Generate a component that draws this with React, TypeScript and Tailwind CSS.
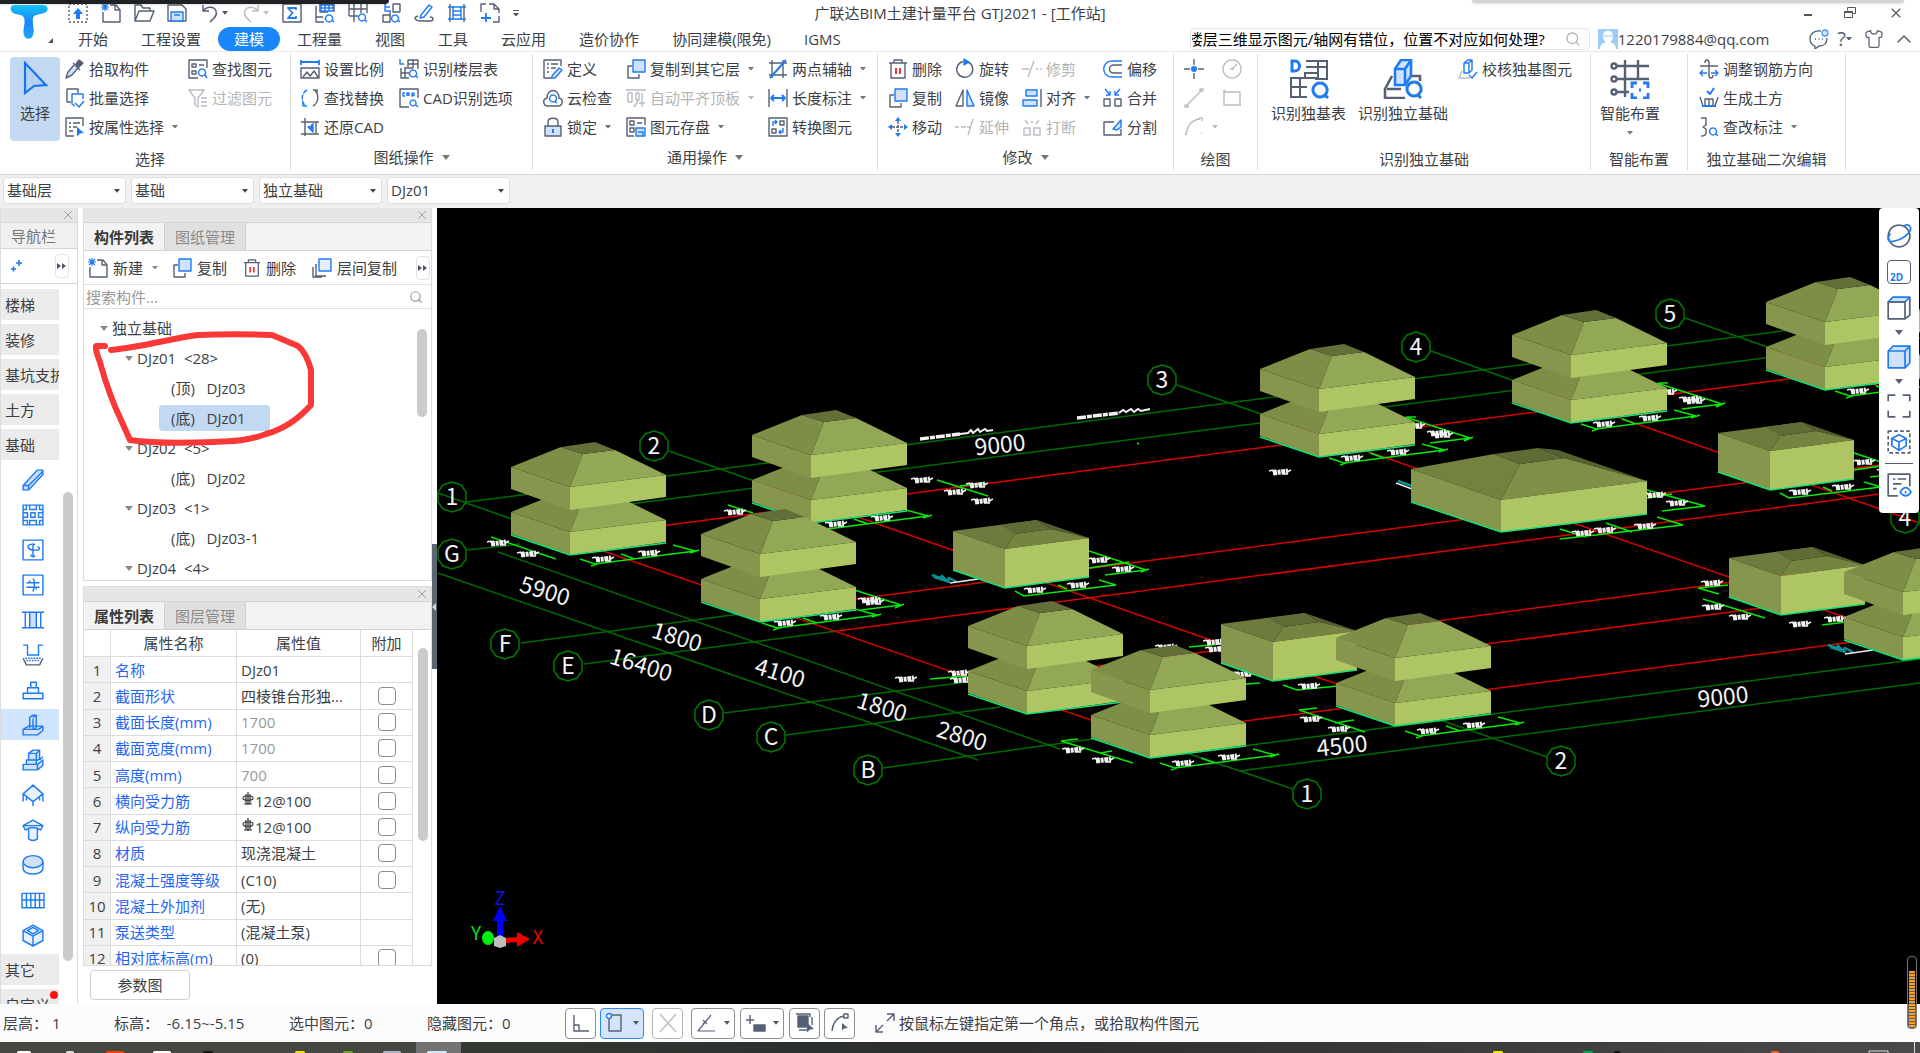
import React from "react";
import { ChevronUp, Search, Shirt, X } from "lucide-react";

const INK = "#566074";
const BLUE = "#1f7bf2";
const PALE = "#cfe1fb";
const GRAY = "#b9bcc2";

/* ---------- icons, all on a 20 x 20 grid ---------- */

const icons: Record<string, React.ReactNode> = {
  upload: (
    <>
      <path d="M1 5V1h18v18H1z" strokeDasharray="2 2" />
      <path d="M10 5l5 6h-3v5H8v-5H5z" fill={BLUE} stroke="none" />
    </>
  ),
  newDoc: (
    <>
      <path d="M9 2h6l4 5v12H2V9" />
      <path d="M14 2v5h5" />
      <path d="M1 1l6 6M7 1L1 7M4 0v8M0 4h8" stroke={BLUE} strokeWidth="1.2" />
    </>
  ),
  open: <path d="M1 18V2h6l2 3h7v3M1 18L5 8h15l-4 10z" />,
  save: (
    <>
      <path d="M3 2h12l4 4v12H1V2z" />
      <path d="M4 9h12v9H4z" fill={PALE} stroke={BLUE} />
      <path d="M7 12h6" stroke={BLUE} />
    </>
  ),
  undo: <path d="M3 8c4-5 11-5 13 0s-3 8-6 11M3 2v6h6" />,
  redo: <path d="M17 8C13 3 6 3 4 8s3 8 6 11M17 2v6h-6" stroke={GRAY} />,
  sigma: (
    <>
      <path d="M1 1h18v18H1z" />
      <path d="M14 7V5H6l4.500 5L6 15h8v-2" stroke={BLUE} strokeWidth="1.800" />
    </>
  ),
  sheetFind: (
    <>
      <path d="M5 1h14v8M5 1v8h8M1 3v16h8M1 14h7" />
      <path d="M6 2h12v6H6zM6 5h12M10 2v6M14 2v6M14 12a3.500 3.500 0 1 0 .1 0M17 17l2 2" stroke={BLUE} />
    </>
  ),
  gridFind: (
    <>
      <path d="M1 6h18M1 13h9M6 1v18M13 1v9M1 1v12M19 1v9" />
      <path d="M14 11a3.500 3.500 0 1 0 .1 0M17 17l2 2" stroke={BLUE} />
    </>
  ),
  swapFind: (
    <>
      <path d="M12 1h7v8M12 1v8h7M2 12v7h7v-7zM9 9v4" />
      <path d="M4 1v7h6M4 4h5M14 12a3.500 3.500 0 1 0 .1 0M17 17l2 2" stroke={BLUE} />
    </>
  ),
  edit: (
    <>
      <path d="M7 12l8-10 3 2-8 10-4 1z" stroke={BLUE} />
      <path d="M4 13c-6 2-2 5 3 5h9c4 0 4-4 0-4" />
    </>
  ),
  column: (
    <>
      <path d="M3 1v18M17 1v18" />
      <path d="M6 3v14M14 3v14M1 4h18M1 16h18M6 8h8M6 12h8" stroke={BLUE} />
    </>
  ),
  addPage: (
    <>
      <path d="M1 9V1h5M9 1h5l5 5v4M19 13v6h-6M14 1v5h5" />
      <path d="M1 15h10M6 10v9" stroke={BLUE} strokeWidth="1.800" />
    </>
  ),
  pipette: (
    <>
      <path d="M9 6L3 13l-2 6 6-3 6-7" fill={PALE} />
      <path d="M8 4l7 7M11 5l3-4 4 3-4 4z" fill={INK} />
    </>
  ),
  batch: (
    <>
      <path d="M6 14H2V1h11v4" />
      <path d="M10 18L7 16V6h11v5" stroke={BLUE} />
      <path d="M10 15l4 4 5-6" stroke={BLUE} />
    </>
  ),
  listPick: (
    <>
      <path d="M18 9V1H1v18h8M4 6h2M8 6h7M4 10h2M8 10h4M4 14h4" />
      <path d="M12 10l7 6-4 .5-3 3z" fill={BLUE} stroke="none" />
    </>
  ),
  listFind: (
    <>
      <path d="M19 9V1H1v18h9M4 5h4v3H4zM4 12h4v3H4zM11 6h5" />
      <path d="M14 10a3.500 3.500 0 1 0 .1 0M17 16l2 3" stroke={BLUE} />
    </>
  ),
  filter: <path d="M1 2h15l-6 8v9l-3-2v-7zM13 10h6M13 14h6M13 18h6" stroke={GRAY} />,
  ratio: (
    <>
      <path d="M1 9h18v10H1zM3 18l4-5 3 4 4-5 4 6" />
      <path d="M1 1v5M19 1v5M1 3h18" stroke={BLUE} strokeWidth="1.800" />
    </>
  ),
  replace: (
    <>
      <path d="M7 2C1 5 1 14 5 17" strokeDasharray="5 1" stroke={BLUE} />
      <path d="M7 18H3v-4" stroke={BLUE} />
      <path d="M13 18c6-3 6-12 2-15M13 2h4v4" />
    </>
  ),
  restore: (
    <>
      <path d="M1 5h18M5 1v18M1 17h18M16 5v12" />
      <path d="M14 7c-2 0-3 2-3 4M8 10l5 5V9z" stroke={BLUE} fill={BLUE} />
    </>
  ),
  floors: (
    <>
      <path d="M9 8V1h10v9M9 5h10M2 9v10h8M2 14h8M6 8v11M6 9h8V1" />
      <path d="M1 0v5h4M14 11a3.500 3.500 0 1 0 .1 0M17 17l2 2" stroke={BLUE} />
    </>
  ),
  cad: (
    <>
      <path d="M10 19H1V1h18v9" />
      <path d="M6 5H4v3h2M8 8V5h2v3M8 7h2M13 5v3c3 0 3-3 0-3M14 12a3 3 0 1 0 .1 0M17 17l2 2" stroke={BLUE} />
    </>
  ),
  define: (
    <>
      <path d="M18 7V1H1v18h8M4 5h2M8 5h7M4 9h2M8 9h5M4 13h2" />
      <path d="M9 17l7-8 3 2-7 8H9z" stroke={BLUE} fill={PALE} />
    </>
  ),
  cloud: (
    <>
      <path d="M5 18c-5 0-6-7-1-8C4 0 16 0 16 10c5 1 4 8-1 8z" />
      <path d="M10 7a3.500 3.500 0 1 0 .1 0M12 13l2 2" stroke={BLUE} />
    </>
  ),
  lock: (
    <>
      <path d="M5 9V5c0-5 10-5 10 0v4" />
      <path d="M2 9h16v10H2z" fill={PALE} />
      <path d="M10 12v4" stroke={BLUE} strokeWidth="2" />
    </>
  ),
  copy: (
    <>
      <path d="M6 7H2v12h11v-4" />
      <path d="M7 1h12v12H7z" fill={PALE} stroke={BLUE} />
    </>
  ),
  copyLayers: (
    <>
      <path d="M4 6v12h10M1 9v10h9" />
      <path d="M7 1h12v12H7z" fill="#e5effe" stroke={BLUE} />
    </>
  ),
  alignTop: <path d="M0 2h20M2 5h4v9H2zM10 5h3v7h-3zM8 19l4-6M16 5v14M13 15h6" stroke={GRAY} />,
  disk: (
    <>
      <path d="M19 8V1H1v18h7M4 4h4v4H4zM4 11h4v4H4zM11 6h5" />
      <path d="M10 11h9v8h-9zM12 15h5v4" stroke={BLUE} fill={PALE} />
    </>
  ),
  auxAxis: (
    <>
      <path d="M4 1v18M15 1v18M1 4h18M1 16h18" />
      <path d="M2 19L18 1" stroke={BLUE} strokeWidth="2" />
    </>
  ),
  length: (
    <>
      <path d="M1 1v18M19 1v18" />
      <path d="M3 10h14M6 7l-3 3 3 3M14 7l3 3-3 3" stroke={BLUE} strokeWidth="1.800" />
    </>
  ),
  convert: (
    <>
      <path d="M1 1h18v18H1zM12 4h4v4h-4zM4 12h4v4H4z" />
      <path d="M5 9V5h4M15 11v4h-4M7 3l2 2-2 2M13 13l-2 2 2 2" stroke={BLUE} />
    </>
  ),
  trash: (
    <>
      <path d="M1 4h18M6 4V1h8v3M3 4v15h14V4" />
      <path d="M8 9v6M12 9v6" stroke="#ee3a3a" strokeWidth="2" />
    </>
  ),
  rotate: (
    <>
      <path d="M8 2.500a8 8 0 1 0 5 .5" />
      <path d="M9 0v6l5-3z" fill={BLUE} stroke={BLUE} />
    </>
  ),
  move: (
    <>
      <path d="M10 4v12M4 10h12" strokeDasharray="3 1" />
      <path d="M10 0l3 4H7zM10 20l3-4H7zM0 10l4-3v6zM20 10l-4-3v6z" fill={BLUE} stroke="none" />
    </>
  ),
  mirror: (
    <>
      <path d="M8 2v16H1z" />
      <path d="M12 2v16h7z" fill={PALE} stroke={BLUE} />
    </>
  ),
  trim: <path d="M0 10h7M14 10h2M18 10h2M6 18l6-16" stroke={GRAY} />,
  extend: <path d="M0 10h4M6 10h5M13 18l5-16M12 10h4" stroke={GRAY} />,
  align: (
    <>
      <path d="M19 1v18" />
      <path d="M4 2h11v6H4zM1 12h14v6H1z" fill={PALE} stroke={BLUE} />
    </>
  ),
  breakUp: <path d="M2 11h6v7H2zM12 11h6v7h-6zM3 3l3 4M17 3l-3 4M10 4v2" stroke={GRAY} />,
  offset: (
    <>
      <path d="M19 6h-8c-6 0-6 8 0 8h8" />
      <path d="M19 2H9C-2 2-2 18 9 18h10" stroke={BLUE} />
    </>
  ),
  merge: (
    <>
      <path d="M1 11h6v7H1zM12 11h6v7h-6z" />
      <path d="M2 1l5 6M7 3v4H3M17 1l-5 6M12 3v4h4" stroke={BLUE} />
    </>
  ),
  split: (
    <>
      <path d="M11 5H1v13h17v-6" />
      <path d="M10 12l8-9v7l-4 3z" stroke={BLUE} fill={PALE} />
    </>
  ),
  point: (
    <>
      <path d="M10 0v6M10 14v6M0 10h6M14 10h6" />
      <circle cx="10" cy="10" r="3" fill={BLUE} stroke="none" />
    </>
  ),
  circle: <path d="M10 1a9 9 0 1 0 .1 0M10 10l5-5M8 10h4" stroke={GRAY} />,
  line: <path d="M3 17L17 3M1 17h3v2H1zM16 1h3v2h-3z" stroke={GRAY} />,
  rect: <path d="M2 4h16v13H2zM1 3h3M16 17h3" stroke={GRAY} />,
  arc: <path d="M2 18C3 9 8 3 16 2M1 17h2M15 1h3v3M17 16h1" stroke={GRAY} />,
  check: (
    <>
      <path d="M4 12l-3 7h11" stroke={GRAY} />
      <path d="M6 4l4-3h4v10l-3 3H6zM6 4h5v9M11 4l3-3M11 16l3 3 5-6" stroke={BLUE} />
    </>
  ),
  rebarDir: (
    <>
      <path d="M1 7h18M10 3v14M6 4c0-4 4-4 4 0M10 16c0 4 4 4 4 0" />
      <path d="M1 14h7M12 14h7M4 11l-3 3 3 3M16 11l3 3-3 3" stroke={BLUE} />
    </>
  ),
  earth: (
    <>
      <path d="M1 9l3 9h12l3-9M6 17v-6h8v6M10 11v6" />
      <path d="M8 3l3 3 4-6M3 18h14" stroke={BLUE} strokeWidth="2" />
    </>
  ),
  markFind: (
    <>
      <path d="M2 1h5v4M7 5v3l-3 2 3 2v4c0 3-3 3-5 3" />
      <path d="M14 11a3.500 3.500 0 1 0 .1 0M17 17l2 2" stroke={BLUE} />
    </>
  ),
  // navigation column
  beam: <path d="M1 15L14 1h5v4L6 19H1zM1 15h5v4M6 15L19 2" fill={PALE} />,
  raft: <path d="M1 1h18v18H1zM4 1v4H1M7 1v4h6V1M16 1v4h3M1 8h4v4H1M8 8h4v4H8zM19 8h-4v4h4M1 15h4v4M7 19v-4h6v4M19 15h-3v4" />,
  slabBar: <path d="M1 1h18v18H1zM10 4v12M12 5c-9-2-9 6 2 5 3 0 2-3 0-3M12 15c-1 2-4 1-4-1" />,
  slabBar2: <path d="M1 1h18v18H1zM4 8h12M4 12h12M10 4c2 3 2 6 0 12M7 8v-2M13 12v2" />,
  strip: (
    <>
      <path d="M7 3h6v14H7z" fill={PALE} stroke="none" />
      <path d="M0 3h20M0 17h20M3 3v14M17 3v14M7 3v14M13 3v14" />
    </>
  ),
  pit: (
    <>
      <path d="M1 1h4v9h10V1h4" />
      <path d="M3 13h14M4 15h12" strokeDasharray="1.500 1" />
      <path d="M1 13l3 6h12l3-6" stroke={INK} />
    </>
  ),
  footing: <path d="M1 13h18v5H1zM5 8h10v5H5zM8 3h5v5H8z" fill="#eef5ff" />,
  isolated: <path d="M1 14l5-3h13v4l-5 4H1zM1 14h14l4-3M7 13V3l3-2h3v11l-2 2H7M10 4v10M10 3l3-2" fill={PALE} />,
  stepped: <path d="M1 14h13v5H1zM14 14l5-4v5l-5 4M4 10h9v4H4zM6 10V4l4-3h6v8l-3 2M6 4h7l3-3M13 4v6M19 7l-3 3" fill={PALE} />,
  slope: <path d="M10 1l9 8-9 7-9-7zM1 9v7M19 9v7M10 16v4M4 12v3M16 12v3" fill="#e8f1ff" />,
  mushroom: <path d="M1 6l9-5 9 5-2 4-4-2H7l-4 2zM6 9v9c2 2 6 2 8 0V9M1 6h18" fill="#e8f1ff" />,
  cylinder: (
    <>
      <path d="M1 7v6c0 7 18 7 18 0V7" fill="#f2f7ff" />
      <ellipse cx="10" cy="7" rx="9" ry="5.500" fill={PALE} />
    </>
  ),
  fence: <path d="M0 4h20v13H0zM4 4v13M8 4v13M12 4v13M16 4v13M0 10h20" />,
  boxPit: <path d="M10 1l9 5v9l-9 5-9-5V6zM1 6l9 5 9-5M10 11v9M5 6l5-3 5 3-5 3z" fill="#e8f1ff" />,
  // view toolbar
  orbit: (
    <>
      <path d="M10 1a9 9 0 1 0 .1 0" />
      <path d="M3 8c-4 5-2 8 4 6 8-2 15-9 12-12-1-2-4-1-6 0" stroke={BLUE} />
    </>
  ),
  cubeTop: (
    <>
      <path d="M1 5l4-4h14l-4 4z" fill={PALE} stroke={BLUE} />
      <path d="M1 5h14v14H1zM15 19l4-3V1" />
    </>
  ),
  cubeFull: <path d="M1 5l4-4h14v14l-4 4H1zM1 5h14v14M15 5l4-4" fill={PALE} stroke={BLUE} />,
  corners: <path d="M1 6V1h6M13 1h6v5M19 14v5h-6M7 19H1v-5" />,
  cubeFrame: (
    <>
      <path d="M1 1h18v18H1z" strokeDasharray="3 2" />
      <path d="M10 4l6 3v6l-6 4-6-4V7zM4 7l6 3 6-3M10 10v7" stroke={BLUE} />
    </>
  ),
  listEye: (
    <>
      <path d="M19 11V1H1v18h8M5 5h2M9 5h7M5 9h7M5 13h3" />
      <path d="M11 16c3-5 6-5 9 0-3 4-6 4-9 0zM15.500 15v2" stroke={BLUE} />
    </>
  ),
  // status bar
  angle: <path d="M3 2v16h15M3 12h5v6" />,
  snapRect: (
    <>
      <path d="M4 2h12v16H4z" />
      <circle cx="4" cy="3" r="2.500" fill="#fff" stroke={BLUE} />
    </>
  ),
  cross: <path d="M2 1l16 18M18 1L2 19" stroke={GRAY} />,
  polar: <path d="M15 2L2 18h17M7 7l4 4M11 7l-4 4" strokeWidth="1.200" />,
  plusBox: (
    <>
      <path d="M1 7h8M5 2v9" />
      <path d="M9 12h11v6H9z" fill={INK} />
    </>
  ),
  layered: (
    <>
      <path d="M3 3h10v11H3z" fill={INK} />
      <path d="M1 1h14v3M4 17h8M17 4v8" />
      <path d="M12 10l7 6-4 .5-3 3z" fill={INK} stroke="none" />
    </>
  ),
  curvePick: (
    <>
      <path d="M2 18C3 8 8 4 14 3M14 1h4v4h-4z" />
      <path d="M12 10l6 5-4 .5-2 2z" fill={INK} stroke="none" />
    </>
  ),
  expand: <path d="M1 19l7-7M12 8l7-7M12 1h7v7M1 12v7h7" />,
};

function Icon({ name, className = "size-5" }: { name: string; className?: string }) {
  return (
    <svg viewBox="0 0 20 20" fill="none" stroke={INK} strokeWidth="1.4" strokeLinejoin="round" className={`shrink-0 overflow-visible ${className}`}>
      {icons[name]}
    </svg>
  );
}

function Caret({ className = "w-2 text-[#777]" }: { className?: string }) {
  return (
    <svg viewBox="0 0 8 5" className={`shrink-0 ${className}`}>
      <path d="M0 0h8L4 5z" fill="currentColor" />
    </svg>
  );
}

/* ---------- header ---------- */

const tabs = ["开始", "工程设置", "建模", "工程量", "视图", "工具", "云应用", "造价协作", "协同建模(限免)", "IGMS"];

function Header() {
  return (
    <header className="relative shrink-0 border-b border-[#e9e9e9]">
      <div className="absolute left-0 top-0 h-1 w-[389px] rounded-br bg-[#202124] shadow" />
      <div className="absolute right-4 top-0 h-[3px] w-[432px] rounded-b bg-[#d4d4d4] shadow" />
      <button aria-label="菜单" className="absolute left-[10px] top-[5px] flex h-10 w-11 items-start">
        <svg viewBox="0 0 44 40" className="h-10 w-11">
          <defs>
            <linearGradient id="logo" x1="0" y1="0" x2="0" y2="1">
              <stop offset="0" stopColor="#12c4f7" />
              <stop offset="0.5" stopColor="#1d86f7" />
              <stop offset="1" stopColor="#1aa6f8" />
            </linearGradient>
          </defs>
          <path d="M5 0h28c6 0 6 7 1 8-5 2-10 1-11 5-1 6 2 12 0 17-1 5-8 5-9 0-2-5 2-12 0-17-1-4-7-3-11-5C0 6-1 0 5 0z" fill="url(#logo)" />
          <path d="M43 33v5h-5z" fill="#555" />
        </svg>
      </button>

      <div className="grid h-[26px] grid-cols-[1fr_auto_1fr] items-center">
        <div className="flex items-center gap-[13px] pl-[68px]">
          {["upload", "newDoc", "open", "save"].map((n) => (
            <button key={n} aria-label={n}><Icon name={n} /></button>
          ))}
          <button aria-label="undo" className="flex items-center gap-0.5"><Icon name="undo" /><Caret className="w-1.5 text-[#555]" /></button>
          <button aria-label="redo" className="flex items-center gap-0.5"><Icon name="redo" /><Caret className="w-1.5 text-[#bbb]" /></button>
          {["sigma", "sheetFind", "gridFind", "swapFind", "edit", "column", "addPage"].map((n) => (
            <button key={n} aria-label={n}><Icon name={n} /></button>
          ))}
          <button aria-label="more"><Caret className="w-1.5 border-t border-[#555] pt-0.5 text-[#555]" /></button>
        </div>
        <h1>广联达BIM土建计量平台 GTJ2021 - [工作站]</h1>
        <div className="flex items-center justify-end gap-8 pr-4">
          <button aria-label="最小化" className="mt-1 h-0.5 w-2 bg-[#555]" />
          <button aria-label="还原">
            <svg viewBox="0 0 12 12" className="size-3" fill="none" stroke="#555"><path d="M3.500 3.500v-3h8v6h-3M.5 4.500h8v6h-8zM.5 5.500h8" /></svg>
          </button>
          <button aria-label="关闭"><X className="size-4" strokeWidth={1.6} color="#555" /></button>
        </div>
      </div>

      <div className="flex h-[25px] items-center">
        <nav className="flex gap-px pl-[62px]">
          {tabs.map((t) => (
            <button key={t} className={`h-6 rounded-full px-4 ${t === "建模" ? "bg-[#1a86fb] text-white" : ""}`}>{t}</button>
          ))}
        </nav>
        <label className="ml-auto flex h-[22px] w-[400px] items-center overflow-hidden rounded-sm border border-[#e6e6e6] pl-px">
          <input aria-label="搜索" defaultValue="楼层三维显示图元/轴网有错位，位置不对应如何处理?" className="min-w-0 flex-1 -indent-1 text-black outline-none" />
          <Search className="mr-2 size-4 text-[#b5b5b5]" />
        </label>
        <button className="ml-2 flex items-center">
          <svg viewBox="0 0 20 20" className="size-5">
            <path d="M0 0h20v20H0z" fill="#9fcbf8" />
            <path d="M5 7c0-7 10-7 10 0 0 3-1 5-3 6 3 1 6 3 6 7H2c0-4 3-6 6-7-2-1-3-3-3-6z" fill="#fff" />
            <path d="M4 7h12" stroke="#9fcbf8" />
          </svg>
          1220179884@qq.com
        </button>
        <div className="ml-10 flex items-center gap-2 pr-1">
          <button aria-label="消息">
            <svg viewBox="0 0 20 20" className="size-5" fill="none" stroke={INK} strokeWidth="1.3">
              <path d="M12 2C5 1 1 5 1 10c0 3 2 6 5 7v3l4-3c5 0 8-3 8-8M6 10h1M9.500 10h1M13 10h1" />
              <circle cx="16" cy="4" r="3" fill="#cfe4ff" stroke="#4a98f5" />
            </svg>
          </button>
          <button aria-label="帮助" className="flex items-center text-[20px]/5 text-[#566074]">?<Caret className="w-1.5 text-[#566074]" /></button>
          <button aria-label="皮肤" className="ml-1"><Shirt className="size-5" strokeWidth={1.5} color={INK} /></button>
          <button aria-label="收起"><ChevronUp className="size-6" strokeWidth={1.5} color={INK} /></button>
        </div>
      </div>
    </header>
  );
}

/* ---------- ribbon ---------- */

type Tool = { icon: string; text?: string; menu?: boolean; off?: boolean };

function ToolColumn({ items }: { items: Tool[] }) {
  return (
    <div className="flex flex-col">
      {items.map((t, i) => (
        <button key={i} disabled={t.off} className={`flex h-[29px] items-center gap-1 whitespace-nowrap ${t.off ? "text-[#b4b4b4]" : ""}`}>
          <Icon name={t.icon} />
          {t.text}
          {t.menu && <Caret className={`ml-1 w-1.5 ${t.off ? "text-[#bbb]" : "text-[#777]"}`} />}
        </button>
      ))}
    </div>
  );
}

function Group({ title, menu, className, children }: { title: string; menu?: boolean; className: string; children: React.ReactNode }) {
  return (
    <section className={`flex h-[116px] shrink-0 flex-col border-r border-[#dcdcdc] ${className}`}>
      <div className="flex h-[91px] shrink-0">{children}</div>
      <h2 className={`flex shrink-0 items-center justify-center gap-2 ${menu ? "h-6" : "h-7"}`}>
        {title}
        {menu && <Caret />}
      </h2>
    </section>
  );
}

function Ribbon() {
  return (
    <div className="flex h-[122px] shrink-0 items-start overflow-hidden pt-0.5">
      <Group title="选择" className="w-[291px] pl-[10px]">
        <button className="mt-[3px] flex h-[84px] w-[50px] flex-col items-center rounded bg-[#c3d9f1] pt-1">
          <svg viewBox="0 0 28 34" className="h-[34px] w-7" fill="#b5d2f5" stroke="#1573ee" strokeWidth="2.2"><path d="M4 2l21 22-12 1-9 7z" /></svg>
          <span className="mt-2">选择</span>
        </button>
        <div className="ml-[5px] flex gap-[10px]">
          <ToolColumn items={[{ icon: "pipette", text: "拾取构件" }, { icon: "batch", text: "批量选择" }, { icon: "listPick", text: "按属性选择", menu: true }]} />
          <ToolColumn items={[{ icon: "listFind", text: "查找图元" }, { icon: "filter", text: "过滤图元", off: true }]} />
        </div>
      </Group>
      <Group title="图纸操作" menu className="w-[242px]">
        <div className="flex gap-[15px] pl-[9px]">
          <ToolColumn items={[{ icon: "ratio", text: "设置比例" }, { icon: "replace", text: "查找替换" }, { icon: "restore", text: "还原CAD" }]} />
          <ToolColumn items={[{ icon: "floors", text: "识别楼层表" }, { icon: "cad", text: "CAD识别选项" }]} />
        </div>
      </Group>
      <Group title="通用操作" menu className="w-[345px]">
        <div className="flex gap-[14px] pl-[10px]">
          <ToolColumn items={[{ icon: "define", text: "定义" }, { icon: "cloud", text: "云检查" }, { icon: "lock", text: "锁定", menu: true }]} />
          <ToolColumn items={[{ icon: "copy", text: "复制到其它层", menu: true }, { icon: "alignTop", text: "自动平齐顶板", menu: true, off: true }, { icon: "disk", text: "图元存盘", menu: true }]} />
          <ToolColumn items={[{ icon: "auxAxis", text: "两点辅轴", menu: true }, { icon: "length", text: "长度标注", menu: true }, { icon: "convert", text: "转换图元" }]} />
        </div>
      </Group>
      <Group title="修改" menu className="w-[296px]">
        <div className="flex gap-[13px] pl-[10px]">
          <ToolColumn items={[{ icon: "trash", text: "删除" }, { icon: "copy", text: "复制" }, { icon: "move", text: "移动" }]} />
          <ToolColumn items={[{ icon: "rotate", text: "旋转" }, { icon: "mirror", text: "镜像" }, { icon: "extend", text: "延伸", off: true }]} />
          <ToolColumn items={[{ icon: "trim", text: "修剪", off: true }, { icon: "align", text: "对齐", menu: true }, { icon: "breakUp", text: "打断", off: true }]} />
          <ToolColumn items={[{ icon: "offset", text: "偏移" }, { icon: "merge", text: "合并" }, { icon: "split", text: "分割" }]} />
        </div>
      </Group>
      <Group title="绘图" className="w-[84px]">
        <div className="flex gap-1 pl-[10px]">
          <ToolColumn items={[{ icon: "point" }, { icon: "line", off: true }, { icon: "arc", menu: true, off: true }]} />
          <ToolColumn items={[{ icon: "circle", off: true }, { icon: "rect", off: true }]} />
        </div>
      </Group>
      <Group title="识别独立基础" className="w-[333px]">
        <button className="flex flex-col items-center self-start pl-[13px] pt-[5px]">
          <svg viewBox="0 0 40 40" className="size-10" fill="none" stroke={INK} strokeWidth="2.6">
            <path d="M17 2h21v18H26M17 8h21M16 20V14h13M29 2v18M2 18v20h16M2 28h16M11 18v20M2 19h27" strokeWidth="2" />
            <path d="M3 2v10h3c6 0 6-10 0-10z" stroke={BLUE} strokeWidth="3" />
            <path d="M31 24a7 7 0 1 0 .1 0M35 35l4 4" stroke={BLUE} strokeWidth="3" />
          </svg>
          <span className="mt-1">识别独基表</span>
        </button>
        <button className="flex flex-col items-center self-start pl-3 pt-[5px]">
          <svg viewBox="0 0 40 40" className="size-10" fill="none" stroke={INK} strokeWidth="2.6">
            <path d="M9 17L2 30v9h20M4 30h14M27 17h10v5" />
            <path d="M12 10l6-9h10v16l-6 9H12zM12 10h10v15M22 10l6-9" fill={PALE} stroke={BLUE} />
            <path d="M31 23a7 7 0 1 0 .1 0M34 35l4 4" stroke={BLUE} strokeWidth="3" />
          </svg>
          <span className="mt-1">识别独立基础</span>
        </button>
        <div className="ml-2.5">
          <ToolColumn items={[{ icon: "check", text: "校核独基图元" }]} />
        </div>
      </Group>
      <Group title="智能布置" className="w-[97px]">
        <button className="flex flex-col items-center self-start pl-[9px] pt-[5px]">
          <svg viewBox="0 0 40 40" className="size-10" fill="none" stroke={INK} strokeWidth="2.400">
            <path d="M6 7h33M6 20h33M6 33h13M15 1v37M28 1v19" />
            <g fill="#fff"><circle cx="4" cy="7" r="2.500" /><circle cx="4" cy="20" r="2.500" /><circle cx="4" cy="33" r="2.500" /></g>
            <path d="M22 29v-5h5M33 24h5v5M38 34v5h-5M27 39h-5v-5M29 31h2" stroke={BLUE} strokeWidth="2.800" />
          </svg>
          <span className="mt-1">智能布置</span>
          <Caret className="mt-2 w-1.5 text-[#777]" />
        </button>
      </Group>
      <Group title="独立基础二次编辑" className="w-[158px]">
        <div className="pl-[11px]">
          <ToolColumn items={[{ icon: "rebarDir", text: "调整钢筋方向" }, { icon: "earth", text: "生成土方" }, { icon: "markFind", text: "查改标注", menu: true }]} />
        </div>
      </Group>
    </div>
  );
}

function FilterBar() {
  return (
    <div className="flex h-[34px] shrink-0 gap-[5px] border-t border-[#d6d6d6] bg-[#f0f0f0] pl-[3px] pt-0.5">
      {["基础层", "基础", "独立基础", "DJz01"].map((v) => (
        <div key={v} className="relative h-[27px] w-[123px]">
          <select aria-label={v} className="size-full appearance-none rounded border border-[#dedede] bg-white px-[3px] pb-px outline-none">
            <option>{v}</option>
          </select>
          <Caret className="pointer-events-none absolute right-1.5 top-3 w-1.5 text-[#444]" />
        </div>
      ))}
    </div>
  );
}

/* ---------- left side ---------- */

function PanelStrip() {
  return (
    <div className="flex h-[15px] shrink-0 items-center justify-end border-b border-[#d5d5d5] bg-[#e6e6e6] pr-0.5">
      <button aria-label="关闭面板"><X className="size-3.5" strokeWidth={1.3} color="#888" /></button>
    </div>
  );
}

function MoreButton() {
  return (
    <button aria-label="更多" className="flex h-6 w-[14px] items-center justify-center rounded border border-[#e2e2e2]">
      <svg viewBox="0 0 10 6" className="w-2.5"><path d="M0 0l4 3-4 3zM5 0l4 3-4 3z" fill="#4c5565" /></svg>
    </button>
  );
}

const navIcons = ["beam", "raft", "slabBar", "slabBar2", "strip", "pit", "footing", "isolated", "stepped", "slope", "mushroom", "cylinder", "fence", "boxPit"];

function NavPanel() {
  const cat = "flex h-[31px] w-[58px] shrink-0 items-center overflow-hidden whitespace-nowrap bg-[#ebebeb] pl-1";
  return (
    <aside className="flex w-[78px] shrink-0 flex-col border-x border-[#dcdcdc]">
      <PanelStrip />
      <div className="flex h-[26px] shrink-0 items-center border-b border-[#d5d5d5] bg-[#f0f0f0] pl-[10px] text-[#777]">导航栏</div>
      <div className="flex h-[35px] shrink-0 items-center justify-between border-b border-[#d5d5d5] pl-2.5 pr-2">
        <svg viewBox="0 0 12 12" className="size-3" stroke={BLUE} strokeWidth="1.600"><path d="M5 3h6M8 0v6M0 9h5M2.500 6.500v5" /></svg>
        <MoreButton />
      </div>
      <div className="flex min-h-0 flex-1 justify-between">
        <div className="flex flex-col gap-1 overflow-hidden pt-[5px]">
          {["楼梯", "装修", "基坑支护", "土方", "基础"].map((c) => (
            <button key={c} className={cat}>{c}</button>
          ))}
          {navIcons.map((n) => (
            <button key={n} aria-label={n} className={`flex h-[31px] w-[58px] shrink-0 items-center justify-center pl-1.5 ${n === "isolated" ? "bg-[#d0e4fb]" : ""}`}>
              <svg viewBox="0 0 20 20" fill="none" stroke={BLUE} strokeWidth="1.300" strokeLinejoin="round" className="size-[22px] overflow-visible">{icons[n]}</svg>
            </button>
          ))}
          <button className={cat}>其它</button>
          <button className={`${cat} relative`}>
            自定义
            <i className="absolute right-px top-0.5 size-2 rounded-full bg-[#ff0f0f]" />
          </button>
        </div>
        <div className="mr-1 mt-[208px] h-[469px] w-[10px] rounded-full bg-[#cbcbcb]" />
      </div>
    </aside>
  );
}

function PanelTabs({ names }: { names: [string, string] }) {
  return (
    <div className="flex h-7 shrink-0 border-b border-[#d0d4d8] bg-[#f2f2f2]">
      <button className="w-[81px] border-r border-[#cdd1d5] font-bold text-[#3a3a3a]">{names[0]}</button>
      <button className="w-[81px] border-r border-[#cdd1d5] bg-[#e0e0e0] text-[#8b8b8b]">{names[1]}</button>
    </div>
  );
}

const tree = [
  { text: "独立基础", level: 0 },
  { text: "DJz01  <28>", level: 1 },
  { text: "(顶)   DJz03", level: 2 },
  { text: "(底)   DJz01", level: 2, active: true },
  { text: "DJz02  <5>", level: 1 },
  { text: "(底)   DJz02", level: 2 },
  { text: "DJz03  <1>", level: 1 },
  { text: "(底)   DJz03-1", level: 2 },
  { text: "DJz04  <4>", level: 1 },
];

const levelPad = ["pl-4", "pl-[41px]", "pl-[75px]"];

function ComponentPanel() {
  return (
    <section className="relative flex h-[373px] shrink-0 flex-col border border-t-0 border-[#dcdcdc]">
      <PanelStrip />
      <PanelTabs names={["构件列表", "图纸管理"]} />
      <div className="flex h-[34px] shrink-0 items-center border-b border-[#e2e2e2] pl-1 pr-px">
        <button className="flex items-center gap-[5px]"><Icon name="newDoc" />新建<Caret className="ml-1 w-1.5 text-[#888]" /></button>
        <button className="ml-3.5 flex items-center gap-[5px]"><Icon name="copy" />复制</button>
        <button className="ml-4 flex items-center gap-[5px]"><Icon name="trash" className="size-[18px]" />删除</button>
        <button className="ml-4 flex items-center gap-[5px]"><Icon name="copyLayers" />层间复制</button>
        <span className="ml-auto"><MoreButton /></span>
      </div>
      <label className="flex h-6 shrink-0 items-center border-b border-[#e2e2e2] pl-0.5 pr-2">
        <input aria-label="搜索构件" placeholder="搜索构件..." className="min-w-0 flex-1 outline-none placeholder:text-[#999]" />
        <Search className="size-3.5 text-[#999]" />
      </label>
      <div className="flex min-h-0 flex-1">
        <ul className="flex-1 overflow-hidden pt-1">
          {tree.map((n, i) => (
            <li key={i} className={`flex h-[30px] items-center gap-1 whitespace-pre ${levelPad[n.level]}`}>
              {n.level < 2 && <Caret className="w-2 text-[#888]" />}
              <button className={n.level < 2 ? "" : n.active ? "h-[26px] w-[111px] rounded bg-[#c3d9f1] pl-3 text-left" : "pl-3"}>{n.text}</button>
            </li>
          ))}
        </ul>
        <div className="mr-1 mt-5 h-[88px] w-[10px] rounded-full bg-[#cbcbcb]" />
      </div>
      {/* hand-drawn marker loop round the first branch */}
      <svg viewBox="0 0 230 120" className="pointer-events-none absolute left-2 top-[120px] h-[120px] w-[230px] overflow-visible" fill="none" stroke="#fb3838" strokeWidth="6" strokeLinecap="round" strokeLinejoin="round">
        <path d="M13 18H4c-1 6 4 14 5 20 4 14 10 33 20 54l9 20c28 4 60 3 84 2 17-1 30 0 52-8 22-6 36-19 45-29V42c-3-11-8-20-13-24l-26-11c-24-1-52-1-74 0-30 4-55 12-87 15" />
      </svg>
    </section>
  );
}

type Prop = { name: string; value: string; muted?: boolean; rebar?: boolean; box?: boolean };

const props: Prop[] = [
  { name: "名称", value: "DJz01" },
  { name: "截面形状", value: "四棱锥台形独...", box: true },
  { name: "截面长度(mm)", value: "1700", muted: true, box: true },
  { name: "截面宽度(mm)", value: "1700", muted: true, box: true },
  { name: "高度(mm)", value: "700", muted: true, box: true },
  { name: "横向受力筋", value: "12@100", rebar: true, box: true },
  { name: "纵向受力筋", value: "12@100", rebar: true, box: true },
  { name: "材质", value: "现浇混凝土", box: true },
  { name: "混凝土强度等级", value: "(C10)", box: true },
  { name: "混凝土外加剂", value: "(无)" },
  { name: "泵送类型", value: "(混凝土泵)" },
  { name: "相对底标高(m)", value: "(0)", box: true },
];

function PropertyPanel() {
  const cell = "border-b border-r border-[#dcdcdc] p-0";
  return (
    <section className="mt-[5px] flex min-h-0 flex-1 flex-col">
      <div className="flex min-h-0 flex-1 flex-col border border-[#dcdcdc]">
        <PanelStrip />
        <PanelTabs names={["属性列表", "图层管理"]} />
        <div className="flex min-h-0 flex-1 overflow-hidden">
          <table className="h-[342px] w-[329px] shrink-0 table-fixed border-separate border-spacing-0 whitespace-nowrap">
            <thead>
              <tr className="h-[27px]">
                <th className={`w-[27px] ${cell}`} />
                <th className={`w-[126px] font-normal ${cell}`}>属性名称</th>
                <th className={`w-[124px] font-normal ${cell}`}>属性值</th>
                <th className={`font-normal ${cell}`}>附加</th>
              </tr>
            </thead>
            <tbody>
              {props.map((p, i) => (
                <tr key={p.name} className="h-[26px]">
                  <td className={`bg-[#f0f0f0] text-center ${cell}`}>{i + 1}</td>
                  <td className={`text-[#1f66f5] ${cell}`}><span className="pl-1">{p.name}</span></td>
                  <td className={`${p.muted ? "text-[#999]" : ""} ${cell}`}>
                    <span className="flex items-center pl-1">
                      {p.rebar && (
                        <svg viewBox="0 0 14 14" className="mb-1 size-3.5" fill="none" stroke="#333" strokeWidth="1.200"><path d="M5 2v10M9 2v10M7 0v13M2 6c0-3 10-3 10 0s-10 3-10 0M3 12h8" /></svg>
                      )}
                      {p.value}
                    </span>
                  </td>
                  <td className={cell}>
                    {p.box && <input type="checkbox" aria-label={`${p.name}附加`} className="mx-auto block size-[18px] appearance-none rounded-sm border border-[#8c8c8c] bg-white" />}
                  </td>
                </tr>
              ))}
            </tbody>
          </table>
          <div className="ml-[5px] mt-[18px] h-[193px] w-[10px] rounded-full bg-[#cbcbcb]" />
        </div>
      </div>
      <div className="flex h-[38px] shrink-0 items-center pl-[7px]">
        <button className="h-[30px] w-[100px] rounded border border-[#cfcfcf] bg-white">参数图</button>
      </div>
    </section>
  );
}

/* ---------- 3D view ---------- */

type P = [number, number];

function Edge({ d }: { d: string }) {
  return <path d={d} fill="none" stroke="#12e277" strokeWidth="1.5" />;
}

// one tier of a tapered footing; (0,0) is the left corner of the eaves
function Tier() {
  return (
    <>
      <path d="M0 0L50-20 72-13 59 20z" fill="#7d8f47" />
      <path d="M59 20L72-13 104-17 155 8z" fill="#93a856" />
      <path d="M50-20L84-25 104-17 72-13z" fill="#626f38" />
      <path d="M0 0L59 20V43L0 22z" fill="#86974d" />
      <path d="M59 20L155 8V30L59 43z" fill="#adc563" />
    </>
  );
}

function Footing({ at: [x, y] }: { at: P }) {
  return (
    <g transform={`translate(${x} ${y})`}>
      <g transform="translate(0 45)">
        <Tier />
        <Edge d="M0 23L59 43 155 31" />
      </g>
      <Tier />
    </g>
  );
}

function Block({ at: [x, y] }: { at: P }) {
  return (
    <g transform={`translate(${x} ${y})`}>
      <path d="M84-11L136 7 98-2z" fill="#555f30" />
      <path d="M0 0L84-11 62 3 52 18z" fill="#6d7b3f" />
      <path d="M52 18L62 3 98-2 136 7z" fill="#758541" />
      <path d="M47-6L84-11 98-2 62 3z" fill="#5f6c36" />
      <path d="M0 0L52 18V57L0 39z" fill="#86974d" />
      <path d="M52 18L136 7V46L52 57z" fill="#adc563" />
      <Edge d="M0 39L52 57 136 46" />
    </g>
  );
}

function Slab() {
  return (
    <g>
      <path d="M1538 448L1558 450 1647 481 1564 458z" fill="#56622f" />
      <path d="M1411 469L1494 454 1520 464 1501 500z" fill="#73833f" />
      <path d="M1501 500L1520 464 1564 458 1647 481z" fill="#7f9148" />
      <path d="M1494 454L1538 448 1564 458 1520 464z" fill="#5f6c36" />
      <path d="M1411 469L1501 500V532L1411 502z" fill="#86974d" />
      <path d="M1501 500L1647 481V514L1501 532z" fill="#adc563" />
      <Edge d="M1411 502L1501 532 1647 514" />
    </g>
  );
}

const greenLines: [number, number, number, number][] = [
  [467, 502, 1920, 313], [560, 513, 1920, 338], [467, 550, 520, 544],
  [438, 493, 560, 536], [438, 573, 978, 760], [498, 552, 1060, 749],
  [521, 643, 740, 614], [584, 664, 837, 631], [724, 713, 975, 681], [786, 735, 1000, 707],
  [883, 768, 1100, 738], [1150, 758, 1920, 659], [1239, 771, 1920, 683],
  [1160, 744, 1293, 789], [669, 451, 760, 483], [1400, 706, 1547, 757],
  [1177, 385, 1270, 417], [1431, 351, 1520, 383], [1685, 318, 1770, 348],
];

const redLines: [number, number, number, number][] = [
  [560, 536, 1160, 744], [760, 483, 1400, 706], [1300, 428, 1850, 619], [1540, 390, 1920, 523], [1780, 352, 1890, 390],
  [600, 534, 1880, 367], [780, 609, 1880, 465], [837, 631, 1880, 494], [1000, 679, 1800, 573],
  [1120, 692, 1800, 603], [1130, 736, 1860, 641],
];

const brightLines: [number, number, number, number][] = [
  [491, 537, 556, 559], [728, 505, 753, 513], [937, 480, 988, 496], [960, 486, 985, 483],
  [1299, 710, 1365, 732], [1299, 710, 1317, 708], [1061, 741, 1133, 763], [1061, 741, 1078, 739],
  [1100, 753, 1112, 751], [1335, 723, 1354, 720],
  [1189, 647, 1221, 644], [930, 679, 967, 676], [1703, 599, 1765, 618], [1698, 588, 1728, 585], [1698, 588, 1719, 594],
  [1560, 539, 1683, 525], [1657, 517, 1683, 525], [1606, 523, 1632, 532], [1560, 529, 1586, 537],
  [1647, 490, 1705, 506], [1662, 511, 1705, 506], [1647, 498, 1672, 494], [1822, 625, 1846, 622], [1297, 690, 1338, 686], [1283, 685, 1297, 690],
  [1137, 443, 1139, 444], [1220, 686, 1260, 683],
];

const scrawls: P[] = [
  [498, 543], [528, 554], [735, 512], [922, 480], [977, 485], [955, 492], [982, 501], [1280, 472],
  [1311, 719], [1339, 729], [1073, 750], [1103, 760], [1214, 642], [1216, 649], [1166, 647], [959, 673], [961, 680], [906, 679],
  [1712, 583], [1713, 607], [1740, 617], [1800, 624], [1835, 619], [1583, 533], [1605, 530], [1645, 526],
  [1655, 495], [1677, 503], [1309, 686], [1243, 674],
];

// tiny dimension figures, foreshortened past reading
function Scrawl({ at: [x, y] }: { at: P }) {
  return (
    <g transform={`translate(${x} ${y})`} fill="none" stroke="#f2f2f2">
      <path d="M-11-1l4-1M7 0l4-2" strokeWidth="1.500" />
      <path d="M-7 1l15-2" strokeWidth="5" strokeDasharray="4 0.700 3 0.700" />
      <path d="M-8-1l4-1M2 2l6 0" strokeWidth="1.500" />
    </g>
  );
}

// dimension chain along the front edge
function FrontDim({ at: [x, y] }: { at: P }) {
  return (
    <g transform={`translate(${x} ${y})`}>
      <path d="M69 92l15 5L184 84l-22-6M110 87l14 5M80 99l9-3M179 86l9-3" fill="none" stroke="#06e806" strokeWidth="1.500" />
      <Scrawl at={[92, 92]} />
      <Scrawl at={[138, 86]} />
    </g>
  );
}

function SideDim({ at: [x, y] }: { at: P }) {
  return (
    <g transform={`translate(${x} ${y})`}>
      <path d="M145 48l65 21-40 5M147 48h9M204 72l9-4" fill="none" stroke="#06e806" strokeWidth="1.500" />
      <Scrawl at={[178, 64]} />
      <Scrawl at={[182, 66]} />
      <Scrawl at={[154, 57]} />
    </g>
  );
}

function BlockDim({ at: [x, y] }: { at: P }) {
  return (
    <g transform={`translate(${x} ${y})`}>
      <path d="M62 60l9 5 92-11-17-5M136 20l57 19-41 5M136 37l40-6M105 54l9 4M188 41l8-3" fill="none" stroke="#06e806" strokeWidth="1.500" />
      <Scrawl at={[82, 59]} />
      <Scrawl at={[125, 54]} />
      <Scrawl at={[146, 29]} />
      <Scrawl at={[170, 38]} />
    </g>
  );
}

const bubbles: [string, number, number][] = [
  ["1", 452, 497], ["2", 654, 446], ["G", 452, 554], ["F", 505, 644], ["E", 568, 666], ["D", 709, 715], ["C", 771, 737],
  ["B", 868, 770], ["3", 1162, 380], ["4", 1416, 347], ["5", 1670, 314], ["1", 1307, 794], ["2", 1561, 761], ["4", 1905, 518],
];

const dims: [string, number, number, number][] = [
  ["5900", 545, 591, 17], ["1800", 677, 637, 17], ["16400", 641, 665, 17], ["4100", 780, 673, 17], ["1800", 882, 707, 17],
  ["2800", 962, 736, 17], ["9000", 1000, 445, -6], ["4500", 1342, 746, -6], ["9000", 1723, 697, -6],
];

function Scene() {
  const seg = (l: number[]) => `M${l[0]} ${l[1]}L${l[2]} ${l[3]}`;
  return (
    <svg viewBox="437 208 1483 796" preserveAspectRatio="xMinYMin slice" className="absolute inset-0 size-full">
      <path d={greenLines.map(seg).join("")} stroke="#006b00" strokeWidth="1.500" />
      <path d={redLines.map(seg).join("")} stroke="#d90000" strokeWidth="1.500" />
      <path d={brightLines.map(seg).join("")} stroke="#06e806" strokeWidth="1.500" />
      {scrawls.map((p, i) => <Scrawl key={i} at={p} />)}
      <path d="M920 439l40-5M1077 418l42-5" fill="none" stroke="#f2f2f2" strokeWidth="3.500" strokeDasharray="9 1 5 1" />
      <path d="M960 434l8-1 3-3 2 3 5-4 2 3 5-3 2 2 6-1M1119 413l4-3 3 2 5-3 3 3 4-3 3 2 9-2" fill="none" stroke="#f2f2f2" strokeWidth="2" />
      <path d="M932 575l8 3 2-2 5 5 2-3 8 4M934 577l16 5M1828 645l8 3 2-2 5 5 2-3 8 4M1830 647l16 5M1398 481l14 5" fill="none" stroke="#0b8f95" strokeWidth="2.500" />
      <path d="M950 583l28-4M1845 654l28-4M1396 483l16 6" stroke="#eee" strokeWidth="1.500" />

      <g fill="none" stroke="#007a00" strokeWidth="1.500">
        {bubbles.map(([, x, y], i) => (
          <path key={i} transform={`translate(${x} ${y})`} d="M0-15L9-12 14-5V5L9 12 0 15-9 12-14 5V-5L-9-12z" />
        ))}
      </g>
      <g fill="#f4f4f4" fontSize="23" textAnchor="middle" fontFamily='"Noto Sans CJK SC", sans-serif'>
        {bubbles.map(([t, x, y], i) => <text key={i} x={x} y={y + 8}>{t}</text>)}
        {dims.map(([t, x, y, r], i) => <text key={i} transform={`translate(${x} ${y}) rotate(${r})`} y="8">{t}</text>)}
      </g>

      <SideDim at={[1260, 369]} />
      <SideDim at={[1512, 335]} />
      <SideDim at={[691, 536]} />
      <BlockDim at={[953, 531]} />
      <BlockDim at={[1718, 433]} />
      {([[511, 467], [744, 432], [693, 531], [1260, 366], [1512, 332], [1766, 299], [1091, 671], [1336, 639]] as P[]).map((p, i) => <FrontDim key={i} at={p} />)}

      <Footing at={[511, 467]} />
      <Footing at={[752, 435]} />
      <Footing at={[1260, 369]} />
      <Footing at={[1512, 335]} />
      <Footing at={[1766, 302]} />
      <Footing at={[701, 534]} />
      <Block at={[953, 531]} />
      <Slab />
      <Block at={[1718, 433]} />
      <Block at={[1729, 558]} />
      <Block at={[1221, 624]} />
      <Footing at={[968, 626]} />
      <Footing at={[1091, 670]} />
      <Footing at={[1336, 638]} />
      <Footing at={[1844, 572]} />

      {/* axis gizmo */}
      <g fontSize="19" textAnchor="middle" fontFamily='"Noto Sans CJK SC", sans-serif'>
        <text x="500" y="905" fill="#1010e8">Z</text>
        <text x="538" y="944" fill="#e80000">X</text>
        <text x="476" y="940" fill="#00e020">Y</text>
      </g>
      <path d="M500 906l7 15h-4v19h-6v-19h-4z" fill="#0000ff" />
      <path d="M506 938l11-1v-5l13 7-13 8v-5l-11 1z" fill="#f00000" />
      <ellipse cx="488" cy="938" rx="6" ry="7" fill="#00ee10" />
      <path d="M494 938l6-3 6 3v8l-6 2-6-2z" fill="#bdbdbd" />
    </svg>
  );
}

function ViewTools() {
  const btn = "flex h-9 items-center justify-center";
  return (
    <div className="absolute right-px top-0 flex w-10 flex-col rounded bg-white py-[10px]">
      <button aria-label="动态观察" className={btn}><Icon name="orbit" className="size-6" /></button>
      <button aria-label="二维" className={btn}>
        <span className="flex size-6 items-end rounded-sm border border-[#566074] pl-0.5 text-[10px]/3 font-bold text-[#1f7bf2]">2D</span>
      </button>
      <button aria-label="俯视" className={btn}><Icon name="cubeTop" className="size-6" /></button>
      <Caret className="mx-auto my-1 w-2 text-[#566074]" />
      <button aria-label="实体" className={btn}><Icon name="cubeFull" className="size-6" /></button>
      <Caret className="mx-auto my-1 w-2 text-[#566074]" />
      <button aria-label="全屏" className={btn}><Icon name="corners" className="size-6" /></button>
      <button aria-label="局部三维" className={btn}><Icon name="cubeFrame" className="size-6" /></button>
      <hr className="mx-1.5 my-[3px] border-[#566074]" />
      <button aria-label="显示设置" className={btn}><Icon name="listEye" className="size-6" /></button>
    </div>
  );
}

/* ---------- bottom ---------- */

function StatusBar() {
  const box = "flex h-[31px] items-center justify-center gap-2 rounded border border-[#8f8f8f] bg-white";
  return (
    <footer className="flex h-[38px] shrink-0 items-center whitespace-nowrap bg-[#fcfcfc]">
      <span className="w-[114px] whitespace-pre pl-[3px]">层高： 1</span>
      <span className="w-[175px] whitespace-pre">标高：  -6.15~-5.15</span>
      <span className="w-[138px]">选中图元：0</span>
      <span className="w-[138px]">隐藏图元：0</span>
      <div className="flex items-center">
        <button aria-label="正交" className={`w-[31px] ${box}`}><Icon name="angle" /></button>
        <button aria-label="捕捉" className="ml-1 flex h-[31px] w-11 items-center justify-center gap-2 rounded border border-[#2f86f0] bg-[#d3e4fb]"><Icon name="snapRect" /><Caret className="w-1.5 text-[#555]" /></button>
        <button aria-label="交点" className="ml-2 flex h-[31px] w-[31px] items-center justify-center rounded border border-[#b5b5b5] bg-white"><Icon name="cross" /></button>
        <button aria-label="极轴" className={`ml-2 w-11 ${box}`}><Icon name="polar" /><Caret className="w-1.5 text-[#555]" /></button>
        <button aria-label="偏移输入" className={`ml-[5px] w-11 ${box}`}><Icon name="plusBox" /><Caret className="w-1.5 text-[#555]" /></button>
        <button aria-label="图层" className={`ml-[5px] w-[31px] ${box}`}><Icon name="layered" /></button>
        <button aria-label="曲线" className={`ml-1 w-[31px] ${box}`}><Icon name="curvePick" /></button>
      </div>
      <span className="flex items-center gap-1 pl-5"><Icon name="expand" />按鼠标左键指定第一个角点，或拾取构件图元</span>
    </footer>
  );
}

const taskIcons: [number, string, number][] = [
  [24, "#fff", 14], [70, "#ddd", 8], [115, "#f5420a", 18], [162, "#fff", 18], [208, "#111", 10], [300, "#f3df10", 10],
  [348, "#6aa82a", 10], [392, "#a9b7c4", 18], [437, "#cfe7f7", 20], [1498, "#f6e700", 10], [1588, "#0aa84f", 10], [1617, "#111", 6], [1775, "#f2622c", 8],
];

function Taskbar() {
  return (
    <div className="h-[11px] shrink-0 overflow-hidden bg-linear-to-r from-[#3d4539] via-[#2a2d2c] to-[#4a4a4a]">
      <svg viewBox="0 0 1920 11" preserveAspectRatio="xMinYMin slice" className="h-[11px] w-full">
        <path d="M0 0h416v11H0z" fill="#444841" />
        <path d="M416 0h45v11h-45z" fill="#737373" />
        {taskIcons.map(([x, fill, w]) => <rect key={x} x={x - w / 2} y="9" width={w} height="4" rx="1.500" fill={fill} />)}
        <path d="M1869 11V9h19v2M1914.500 0v11" fill="none" stroke="#ddd" />
      </svg>
    </div>
  );
}

export default function App() {
  return (
    <div className="relative flex h-screen flex-col overflow-hidden bg-white font-['Open_Sans','Noto_Sans_CJK_SC',sans-serif] text-[15px]/5 text-[#3c3f45]">
      <Header />
      <Ribbon />
      <FilterBar />
      <main className="flex min-h-0 flex-1">
        <NavPanel />
        <div className="ml-[5px] flex w-[349px] shrink-0 flex-col">
          <ComponentPanel />
          <PropertyPanel />
        </div>
        <div className="flex w-[5px] shrink-0 flex-col pt-[336px]">
          <button aria-label="折叠" className="flex h-[125px] items-center bg-[#5c6673]">
            <svg viewBox="0 0 4 8" className="w-1"><path d="M4 0v8L0 4z" fill="#cfd4da" /></svg>
          </button>
        </div>
        <div className="relative flex-1 overflow-hidden bg-black">
          <Scene />
          <ViewTools />
        </div>
      </main>
      <StatusBar />
      <Taskbar />
      {/* level meter floating over the lower right corner */}
      <div className="absolute bottom-6 right-[3px] flex h-[73px] w-[10px] flex-col justify-end rounded border border-[#777] bg-black/60 p-px">
        <div className="h-14 bg-[repeating-linear-gradient(#ff9d1e_0_2px,#5a5a5a_2px_3px)]" />
      </div>
    </div>
  );
}
